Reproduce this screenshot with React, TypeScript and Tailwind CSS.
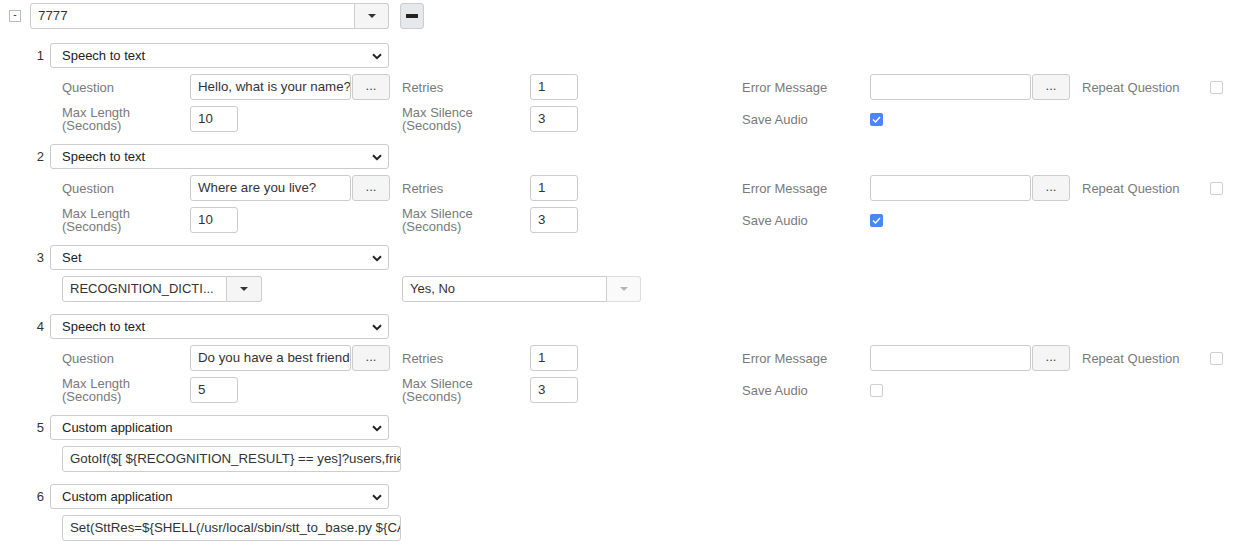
import React from "react";

const font = { fontFamily: '"Liberation Sans", Arial, sans-serif' };

const Caret = ({ light }: { light?: boolean }) => (
  <svg width="8" height="4" viewBox="0 0 8 4">
    <path d="M0 0 L8 0 L4 4 Z" fill={light ? "#b5b5b5" : "#333"} />
  </svg>
);

const Chevron = () => (
  <svg width="10" height="7" viewBox="0 0 10 7" className="absolute right-[6px] top-[9px]">
    <path d="M1 1.2 L5 5.2 L9 1.2" fill="none" stroke="#222" strokeWidth="2" />
  </svg>
);

const Select = ({ value }: { value: string }) => (
  <div className="relative w-[339px] h-[25px] border border-[#ccc] rounded-[3px] bg-white flex items-center pl-[11px] text-[13px] text-[#222]">
    {value}
    <Chevron />
  </div>
);

const Input = ({ value, w }: { value?: string; w: string }) => (
  <div className={`${w} h-[26px] border border-[#ccc] rounded-[3px] bg-white flex items-center px-[7px] text-[13.3px] text-[#333] overflow-hidden whitespace-nowrap`}>
    {value}
  </div>
);

const Dots = () => (
  <div className="w-[38px] h-[26px] ml-px border border-[#ccc] rounded-[3px] bg-[#f5f5f5] flex items-center justify-center text-[13px] text-[#444] pb-[3px]">
    ...
  </div>
);

const Label = ({ children }: { children: React.ReactNode }) => (
  <div className="w-[128px] text-[13px] leading-[13px] text-[#7a7a7a]">{children}</div>
);

const Check = ({ on }: { on?: boolean }) =>
  on ? (
    <div className="w-[13px] h-[13px] rounded-[2px] bg-[#4a86f7] flex items-center justify-center">
      <svg width="9" height="7" viewBox="0 0 9 7">
        <path d="M1 3.5 L3.5 6 L8 1" fill="none" stroke="white" strokeWidth="1.4" />
      </svg>
    </div>
  ) : (
    <div className="w-[13px] h-[13px] rounded-[2px] border border-[#cfcfcf] bg-white" />
  );

const Step = ({ n, value, children }: { n: number; value: string; children?: React.ReactNode }) => (
  <div className="flex flex-col gap-[6px] mb-[12px]">
    <div className="flex items-center">
      <div className="w-[45px] text-right text-[13px] text-[#333] pr-[1px]">{n}</div>
      <div className="ml-[5px]">
        <Select value={value} />
      </div>
    </div>
    {children}
  </div>
);

const SttRows = ({ q, len, saveAudio }: { q: string; len: string; saveAudio: boolean }) => (
  <>
    <div className="flex items-center h-[26px] pl-[62px]">
      <Label>Question</Label>
      <div className="w-[212px] flex">
        <Input value={q} w="w-[161px]" />
        <Dots />
      </div>
      <Label>Retries</Label>
      <div className="w-[212px]">
        <Input value="1" w="w-[48px]" />
      </div>
      <Label>Error Message</Label>
      <div className="w-[212px] flex">
        <Input w="w-[161px]" />
        <Dots />
      </div>
      <Label>Repeat Question</Label>
      <Check />
    </div>
    <div className="flex items-center h-[26px] pl-[62px]">
      <Label>
        Max Length
        <br />
        (Seconds)
      </Label>
      <div className="w-[212px]">
        <Input value={len} w="w-[48px]" />
      </div>
      <Label>
        Max Silence
        <br />
        (Seconds)
      </Label>
      <div className="w-[212px]">
        <Input value="3" w="w-[48px]" />
      </div>
      <Label>Save Audio</Label>
      <Check on={saveAudio} />
    </div>
  </>
);

const App = () => {
  return (
    <div className="w-[1251px] h-[560px] bg-white pt-[3px]" style={font}>
      <div className="flex items-center h-[26px] pl-[9px]">
        <div className="w-[12px] h-[12px] border border-[#bbb] bg-white flex items-center justify-center text-[10px] leading-none text-[#333] pb-[2px]">
          -
        </div>
        <div className="ml-[9px] flex h-[26px]">
          <div className="w-[325px] h-full border border-[#ccc] rounded-l-[3px] bg-white flex items-center px-[7px] text-[13.3px] text-[#333]">
            7777
          </div>
          <div className="w-[34px] h-full border border-l-0 border-[#ccc] rounded-r-[3px] bg-[#f5f5f5] flex items-center justify-center">
            <Caret />
          </div>
        </div>
        <div className="ml-[11px] w-[24px] h-[26px] border border-[#ccc] rounded-[3px] bg-[#e6e9ec] flex items-center justify-center">
          <div className="w-[12px] h-[4px] bg-[#222]" />
        </div>
      </div>

      <div className="mt-[14px]">
        <Step n={1} value="Speech to text">
          <SttRows q="Hello, what is your name?" len="10" saveAudio />
        </Step>
        <Step n={2} value="Speech to text">
          <SttRows q="Where are you live?" len="10" saveAudio />
        </Step>
        <Step n={3} value="Set">
          <div className="flex items-center h-[26px] pl-[62px]">
            <div className="w-[340px] flex">
              <div className="w-[165px] h-[26px] border border-[#ccc] rounded-l-[3px] bg-white flex items-center px-[7px] text-[13px] text-[#333] whitespace-nowrap overflow-hidden">
                RECOGNITION_DICTI...
              </div>
              <div className="w-[35px] h-[26px] border border-l-0 border-[#ccc] rounded-r-[3px] bg-[#f5f5f5] flex items-center justify-center">
                <Caret />
              </div>
            </div>
            <div className="flex">
              <div className="w-[205px] h-[26px] border border-[#ccc] rounded-l-[3px] bg-white flex items-center px-[7px] text-[13px] text-[#333]">
                Yes, No
              </div>
              <div className="w-[34px] h-[26px] border border-l-0 border-[#ddd] rounded-r-[3px] bg-[#fafafa] flex items-center justify-center">
                <Caret light />
              </div>
            </div>
          </div>
        </Step>
        <Step n={4} value="Speech to text">
          <SttRows q="Do you have a best friend?" len="5" saveAudio={false} />
        </Step>
        <Step n={5} value="Custom application">
          <div className="pl-[62px]">
            <Input value="GotoIf($[ ${RECOGNITION_RESULT} == yes]?users,friend,1)" w="w-[339px]" />
          </div>
        </Step>
        <Step n={6} value="Custom application">
          <div className="pl-[62px]">
            <Input value="Set(SttRes=${SHELL(/usr/local/sbin/stt_to_base.py ${CALLERID(num)})})" w="w-[339px]" />
          </div>
        </Step>
      </div>
    </div>
  );
};

export default App;
